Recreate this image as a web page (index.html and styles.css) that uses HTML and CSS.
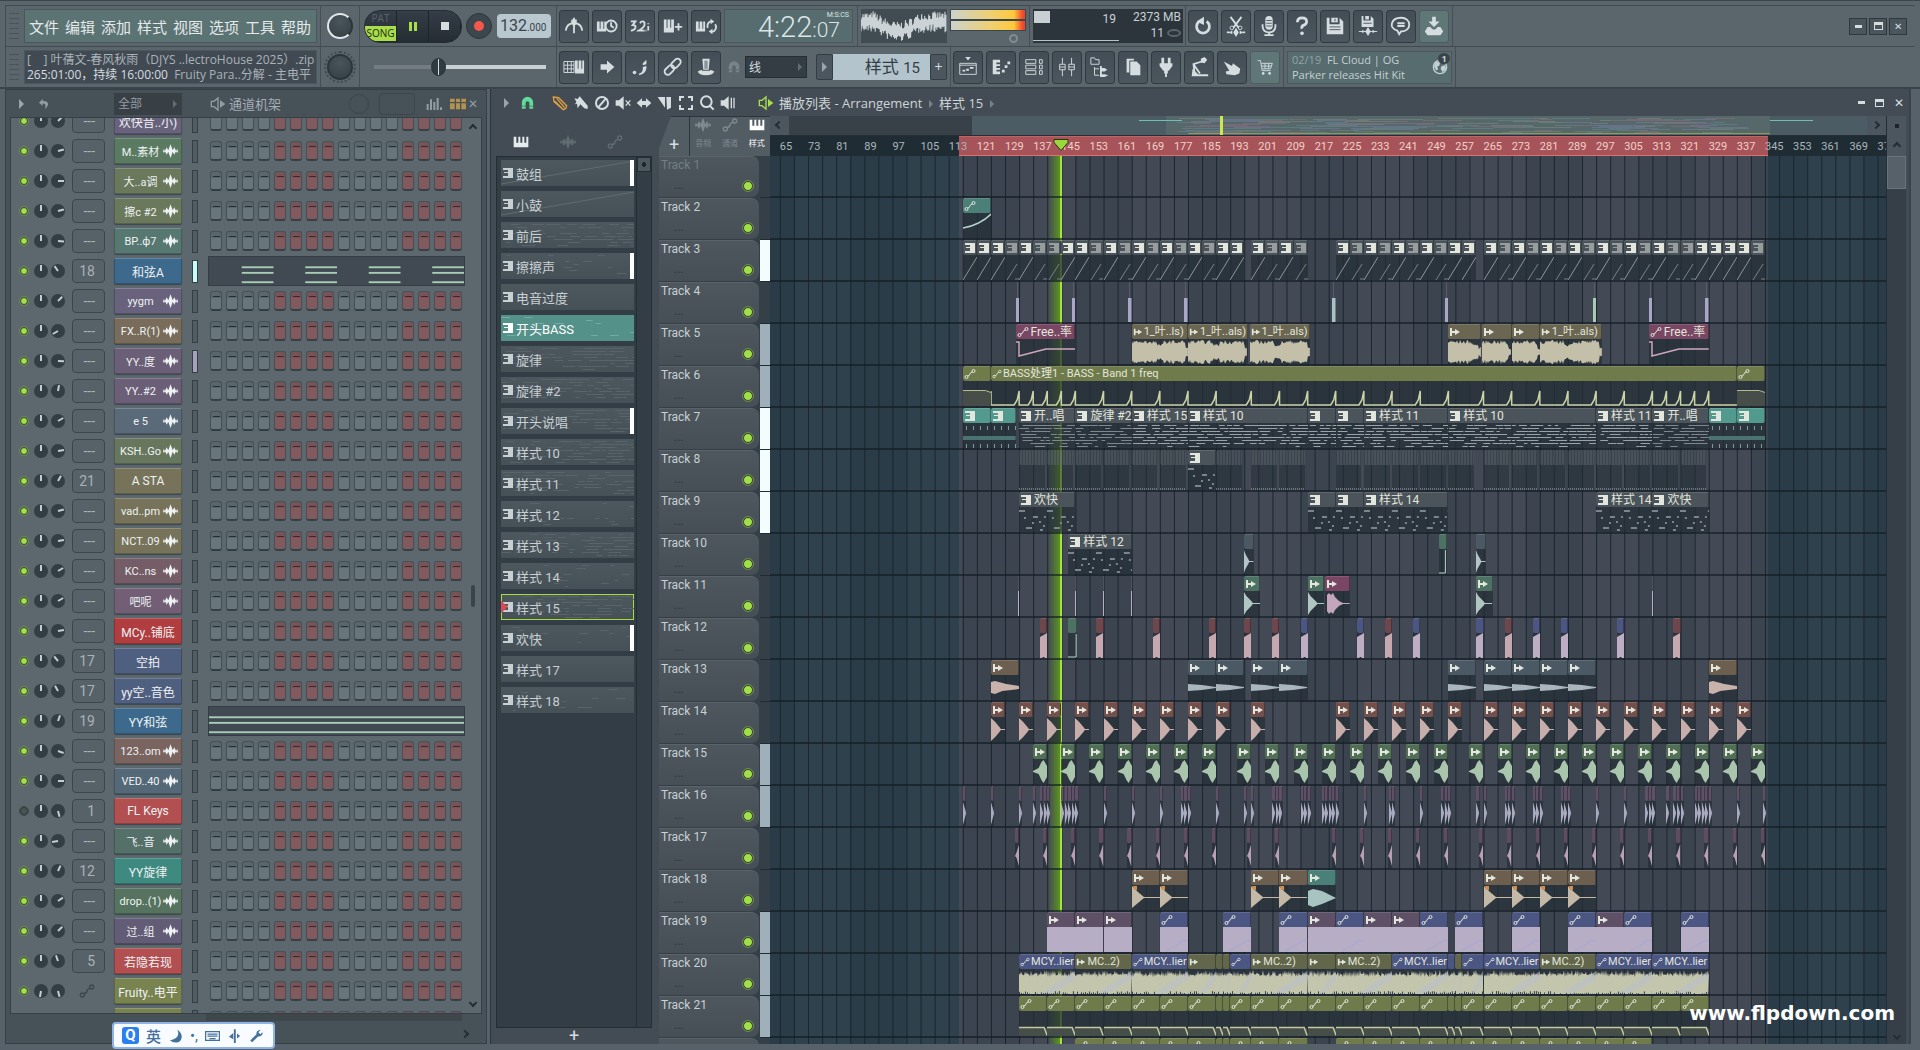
FILE: index.html
```html
<!DOCTYPE html>
<html lang="zh-CN">
<head>
    <meta charset="UTF-8">
    <meta name="viewport" content="width=device-width, initial-scale=1.0">
    <title>FL Studio</title>
    <link rel="stylesheet" href="styles.css">
</head>
<body>
    <svg class="sprite" aria-hidden="true">
        <symbol id="i-metro" viewBox="0 0 24 24"><path d="M3 17Q4 10 10 9M21 17Q20 10 14 9M12 3v17" class="s"/><path d="M9 5h6v4l-3 4-3-4z"/></symbol>
        <symbol id="i-wait" viewBox="0 0 24 24"><path d="M1 7h3v8H1zM5 7h3v8H5zM9 7h2v8H9zM1 15h10v3H1z"/><circle cx="16.500" cy="12" r="6" class="s"/><path d="M16.500 8v4l3 2" class="s"/></symbol>
        <symbol id="i-count" viewBox="0 0 24 24"><path d="M2 7h5l-3 4q4 0 3 3t-5 3M12 9q1-2 3-2t2 3-6 7h6M21 9v1M21 12v5M9 17h1M18 17h1" class="s"/></symbol>
        <symbol id="i-overdub" viewBox="0 0 24 24"><path d="M2 5h3v9H2zM6 5h3v9H6zM10 5h3v9h-3zM2 14h11v5H2zM17 9h2v3h3v2h-3v3h-2v-3h-3v-2h3z"/></symbol>
        <symbol id="i-loop" viewBox="0 0 24 24"><path d="M1 7h3v8H1zM5 7h3v8H5zM9 7h2v8H9zM1 15h10v3H1z"/><path d="M14 14a4 5 0 0 1 4-7M22 10a4 5 0 0 1-4 8" class="s"/><path d="M17 4l4 3-4 3zM19 15l-4 3 4 3z"/></symbol>
        <symbol id="i-typing" viewBox="0 0 24 24"><path d="M1 6h11v12H1zM1 10h11M1 14h11M5 6v12M9 6v12" class="s t"/><path d="M13 5h3v9h-3zM17 5h3v9h-3zM21 5h2v9h-2zM13 14h10v5H13z"/></symbol>
        <symbol id="i-arrow" viewBox="0 0 24 24"><path d="M5 9h7V5l8 7-8 7v-4H5z"/></symbol>
        <symbol id="i-steps" viewBox="0 0 24 24"><circle cx="6" cy="18" r="2"/><path d="M11 19q5-1 4-7l4-1q1 8-8 10zM15 8l4-4v5l-4 1z"/></symbol>
        <symbol id="i-link" viewBox="0 0 24 24"><g transform="rotate(-45 12 12)" class="s"><rect x="1" y="8" width="12" height="7" rx="3.500"/><rect x="11" y="8" width="12" height="7" rx="3.500"/></g></symbol>
        <symbol id="i-hat" viewBox="0 0 24 24"><path d="M8 3h8l-1 12H9z"/><path d="M3 17q4-3 5-1h8q1-2 5 1-1 4-9 4t-9-4z"/><path d="M11 5v9M13 5v9" class="k"/></symbol>
        <symbol id="i-playlist" viewBox="0 0 24 24"><path d="M3 8h18v12H3zM3 10h18" class="s t"/><path d="M9 1h6l-3 4zM6 15h3v2H6zM10 14h3v2h-3zM14 12h4v2h-4z"/></symbol>
        <symbol id="i-pianoroll" viewBox="0 0 24 24"><path d="M3 4h4v16H3zM7 4h4v3H7zM7 9h4v2H7zM7 13h4v2H7zM7 17h4v3H7zM13 15h3v3h-3zM16 10h3v3h-3zM19 6h3v3h-3z"/></symbol>
        <symbol id="i-rack" viewBox="0 0 24 24"><path d="M3 4h11v4H3zM3 10h11v4H3zM3 16h11v4H3zM18 4h3v4h-3zM18 10h3v4h-3zM18 16h3v4h-3z" class="s t"/></symbol>
        <symbol id="i-mixer" viewBox="0 0 24 24"><path d="M7 2v7M7 15v7M17 2v7M17 15v7M4 9h6v6H4zM14 9h6v6h-6zM4 12h6M14 12h6" class="s t"/></symbol>
        <symbol id="i-browser" viewBox="0 0 24 24"><path d="M2 2h4l1 2h4v5H2zM6 12v9h5M6 14h5" class="s t"/><path d="M12 11h2v2h3l3 2-3 2h-3v1h-2zM12 18h2v2h3l4 1-4 2h-5z"/></symbol>
        <symbol id="i-copy" viewBox="0 0 24 24"><path d="M5 3h8v2H8v13H5zM9 6h7l4 4v11H9z"/></symbol>
        <symbol id="i-plug" viewBox="0 0 24 24"><path d="M7 2h3v6H7zM14 2h3v6h-3zM5 8h14v3l-4 5h-1v3h-1v4h-2v-4h-1v-3H9l-4-5z"/></symbol>
        <symbol id="i-tempo" viewBox="0 0 24 24"><path d="M14 3l4-2 3 3-3 4-4-1zM4 22h18v-2H11l-6-6z"/><path d="M15 6L6 9l1 8M6 9l7 10" class="s"/></symbol>
        <symbol id="i-hand" viewBox="0 0 24 24"><path d="M3 6l9 5 1-3 8 6-1 5-5 2-9-1-1-3 4-1z"/></symbol>
        <symbol id="i-cart" viewBox="0 0 24 24"><path d="M4 5h3l2 11h9M8 8h12l-2 6H9M12 8v6M16 8v6M8 11h11" class="s t"/><circle cx="10" cy="19" r="1.500"/><circle cx="17" cy="19" r="1.500"/></symbol>
        <symbol id="i-undo" viewBox="0 0 24 24"><path d="M8 7a7 7 0 1 0 8 0" class="s b"/><path d="M5 7l8-5v9z"/></symbol>
        <symbol id="i-cut" viewBox="0 0 24 24"><path d="M6 2l9 12M18 2L9 14M2 19h3M19 19h3" class="s"/><circle cx="7.500" cy="14" r="2" class="s t"/><circle cx="16.500" cy="14" r="2" class="s t"/><path d="M4 19l4-2v4zM20 19l-4-2v4zM12 14l3 5-3 5-3-5z"/></symbol>
        <symbol id="i-mic" viewBox="0 0 24 24"><rect x="8" y="1" width="8" height="15" rx="4"/><path d="M5 10v3q1 6 7 6t7-6v-3M12 19v3M7 22h10" class="s"/><path d="M9 6h6M9 9h6M9 12h6" class="k"/></symbol>
        <symbol id="i-help" viewBox="0 0 24 24"><path d="M7 8q0-5 5-5t5 4q0 3-3 4t-2 4" class="s b"/><circle cx="12" cy="20" r="2"/></symbol>
        <symbol id="i-save" viewBox="0 0 24 24"><path d="M3 3h3v7h11V3l4 4v14H3z"/><path d="M8 3h7v5H8z"/><path d="M12 4v3M6 13h12M6 16h12" class="k"/></symbol>
        <symbol id="i-saveas" viewBox="0 0 24 24"><path d="M5 1h2v5h8V1l3 3v9H5zM9 1h4v4H9zM4 18l3-2v4zM20 18l-3-2v4zM12 13l3 5-3 5-3-5z"/><path d="M2 18h20" class="s t"/><path d="M7 9h9" class="k"/></symbol>
        <symbol id="i-chat" viewBox="0 0 24 24"><path d="M12 3c12 0 12 15 0 15l-2 3-2-4C-2 14 1 3 12 3zM8 9h8M8 12h8" class="s"/></symbol>
        <symbol id="i-dl" viewBox="0 0 24 24"><path d="M10 2h4v5h4l-6 6-6-6h4zM5 13h3q4 6 8 0h3l3 5-3 4H5l-3-4z"/></symbol>
        <symbol id="i-magnet" viewBox="0 0 24 24"><path d="M3 21V11a9 9 0 0 1 18 0v10h-6V12a3 3 0 0 0-6 0v9z"/><path d="M3 17h6M15 17h6" class="k"/></symbol>
        <symbol id="i-pencil" viewBox="0 0 24 24"><path d="M2 3l8 1 12 12-1 4-4 2L3 10zM7 5l12 14M4 9l12 12" class="s"/></symbol>
        <symbol id="i-brush" viewBox="0 0 24 24"><path d="M2 5l5 1 3-4 5 6 7 8v5l-5-1-6-6-4 6-1-7-3 1 2-4z"/></symbol>
        <symbol id="i-ban" viewBox="0 0 24 24"><circle cx="12" cy="12" r="9" class="s b"/><path d="M18 5L6 19" class="s b"/></symbol>
        <symbol id="i-mute" viewBox="0 0 24 24"><path d="M1 8h5l7-6v20l-7-6H1z"/><path d="M16 8l7 8M23 8l-7 8" class="s"/></symbol>
        <symbol id="i-slip" viewBox="0 0 24 24"><path d="M1 12l8-7v4h6V5l8 7-8 7v-4H9v4z"/></symbol>
        <symbol id="i-slice" viewBox="0 0 24 24"><path d="M1 3h11v16z"/><path d="M14 3h7v16l-6 3z"/></symbol>
        <symbol id="i-select" viewBox="0 0 24 24"><path d="M3 9V3h6M15 3h6v6M21 15v6h-6M9 21H3v-6" class="s b"/></symbol>
        <symbol id="i-zoom" viewBox="0 0 24 24"><circle cx="11" cy="10" r="8" class="s b"/><path d="M16 16l6 6" class="s b"/></symbol>
        <symbol id="i-play" viewBox="0 0 24 24"><path d="M1 8h5l7-6v20l-7-6H1zM16 4h2v16h-2zM20 4h2v16h-2z"/></symbol>
        <symbol id="i-speaker" viewBox="0 0 24 24"><path d="M2 8h4l6-5v18l-6-5H2z" class="s"/><path d="M15 6l8 6-8 6z"/></symbol>
        <symbol id="i-keys" viewBox="0 0 24 24"><path d="M1 4h4v9H1zM8 4h3v9H8zM14 4h3v9h-3zM20 4h3v9h-3zM1 13h22v7H1z"/></symbol>
        <symbol id="i-wave" viewBox="0 0 24 24"><path d="M12 1l4 11-4 11-4-11zM6 6l3 6-3 6-3-6zM18 6l3 6-3 6-3-6zM0 11h24v2H0zM1 9h1v6H1zM22 9h1v6h-1z"/></symbol>
        <symbol id="i-auto" viewBox="0 0 24 24"><circle cx="5" cy="18" r="3" class="s"/><circle cx="19" cy="6" r="3" class="s"/><path d="M7 16q4 0 5-4t5-4" class="s"/></symbol>
        <symbol id="i-pat" viewBox="0 0 12 12"><path d="M6 1h5v10H6zM1 1h5v2H1zM2 5h4v1H2zM1 9h5v2H1z"/></symbol>
        <symbol id="i-clip" viewBox="0 0 12 12"><path d="M1 2h2v3h3V3l5 3-5 3V7H3v3H1z"/></symbol>
        <symbol id="i-back" viewBox="0 0 24 24"><path d="M8 1L0 9l8 7v-5q9-1 5 12 16-16-5-18z"/></symbol>
        <symbol id="i-bars" viewBox="0 0 24 24"><path d="M1 12h3v9H1zM6 5h3v16H6zM11 9h3v12h-3zM16 3h3v18h-3zM21 17h3v4h-3z"/></symbol>
        <symbol id="i-pads" viewBox="0 0 24 24"><path d="M0 4h7v5H0zM9 4h6v5H9zM17 4h7v5h-7zM0 11h7v9H0zM9 11h6v9H9zM17 11h7v9h-7z"/></symbol>
        <symbol id="i-globe" viewBox="0 0 24 24"><circle cx="12" cy="12" r="10" class="s"/><path d="M4 7q5-5 8-2l-1 5-3 1 1 5-3 1-3-6zM14 11l6-2 1 6-5 5-3-5z"/></symbol>
        <symbol id="i-moon" viewBox="0 0 24 24"><path d="M15 2q6 13-12 17 16 9 19-5 0-8-7-12z"/></symbol>
        <symbol id="i-kbd" viewBox="0 0 24 24"><path d="M1 5h22v14H1zM4 9h16M4 12h16M7 16h10" class="s"/></symbol>
        <symbol id="i-pin" viewBox="0 0 24 24"><path d="M11 1h3v22h-3zM3 13l7-6v10zM16 8l5 4-5 4z"/></symbol>
        <symbol id="i-wrench" viewBox="0 0 24 24"><path d="M2 19L12 9q-1-6 7-7l-4 4 3 3 4-3q0 7-8 7L5 22z"/></symbol>
    </svg>

    <header class="toolbar">
        <div class="bar">
            <span class="grip"></span>
            <nav class="menu">
                <button>文件</button><button>编辑</button><button>添加</button><button>样式</button><button>视图</button><button>选项</button><button>工具</button><button>帮助</button>
            </nav>
            <div class="cell knob-cell"><span class="dial dial-big"></span></div>
            <div class="cell transport">
                <div class="deck">
                    <button class="mode"><span>PAT</span><b>SONG</b></button>
                    <button class="pause" aria-label="暂停"><i></i><i></i></button>
                    <button class="stop" aria-label="停止"><i></i></button>
                </div>
                <button class="rec" aria-label="录音"><i></i></button>
                <div class="tempo">132<small>.000</small></div>
            </div>
            <div class="cell tools" data-icons="metro wait count overdub loop"></div>
            <div class="clock"><span>4:22<small>:07</small></span><sup>M:S:CS</sup></div>
            <div class="cell scope">
                <svg class="osc" viewBox="0 0 85 33" preserveAspectRatio="none"></svg>
                <div class="peaks"><i></i><i></i><span></span></div>
            </div>
            <div class="cell cpu">
                <div class="cpu-box">
                    <div class="cpu-left"><i></i><span>19</span></div>
                    <div class="cpu-right"><span>2373 MB</span><span>11 <em></em></span></div>
                </div>
            </div>
            <div class="cell tools last" data-icons="undo cut mic help save saveas chat *dl"></div>
            <div class="wins"><button aria-label="最小化"><i class="min"></i></button><button aria-label="还原"><i class="max"></i></button><button aria-label="关闭">✕</button></div>
        </div>
        <div class="bar">
            <span class="grip"></span>
            <div class="hint">
                <div class="dim">[&nbsp;&nbsp;&nbsp; ] 叶蒨文-春风秋雨（DJYS ..lectroHouse 2025）.zip</div>
                <div>265:01:00，持续 16:00:00&nbsp; <span>Fruity Para..分解 - 主电平</span></div>
            </div>
            <div class="cell knob-cell"><span class="dial dial-pitch"></span></div>
            <div class="cell transport"><input class="pos" type="range" min="0" max="100" value="36" aria-label="歌曲位置"></div>
            <div class="cell tools" data-icons="typing arrow steps link hat"></div>
            <div class="snap">
                <svg class="icon dimmed"><use href="#i-magnet"/></svg>
                <span class="drop"><select aria-label="吸附"><option>线</option></select></span>
            </div>
            <div class="pattern">
                <button aria-label="样式菜单"><i class="tri"></i></button>
                <div class="pat-name">样式 <span>15</span></div>
                <button>+</button>
            </div>
            <div class="cell tools" data-icons="playlist pianoroll rack mixer browser copy plug tempo hand *cart"></div>
            <div class="cell news-cell">
                <a class="news" href="#news">
                    <span><em>02/19</em>&nbsp; FL Cloud | OG<br>Parker releases Hit Kit</span>
                    <svg class="icon"><use href="#i-globe"/></svg><b>1</b>
                </a>
            </div>
        </div>
    </header>

    <main>
        <section class="rack">
            <div class="rack-head">
                <i class="tri"></i>
                <svg class="icon back"><use href="#i-back"/></svg>
                <span class="drop"><select aria-label="通道过滤"><option>全部</option></select></span>
                <svg class="icon spk"><use href="#i-speaker"/></svg>
                <h2>通道机架</h2>
                <span class="swing"></span><span class="swing-box"></span>
                <svg class="icon"><use href="#i-bars"/></svg>
                <svg class="icon pads"><use href="#i-pads"/></svg>
                <button aria-label="关闭">✕</button>
            </div>
            <div class="rack-body">
                <div class="channels" id="channels"></div>
                <div class="rack-scroll"><i class="chev up"></i><span></span><i class="chev down"></i></div>
            </div>
            <div class="rack-foot"><span></span><i class="chev right"></i></div>
        </section>

        <section class="playlist">
            <div class="pl-head">
                <i class="tri"></i>
                <svg class="icon green"><use href="#i-magnet"/></svg>
                <div class="pl-tools" id="pl-tools"></div>
                <svg class="icon lime"><use href="#i-speaker"/></svg>
                <h2>播放列表 - Arrangement <i class="tri"></i> 样式 15 <i class="tri"></i></h2>
                <div class="pl-wins"><i class="min"></i><i class="max"></i><span>✕</span></div>
            </div>
            <div class="pl-body">
                <aside class="picker">
                    <div class="picker-tabs">
                        <svg class="icon on"><use href="#i-keys"/></svg>
                        <svg class="icon"><use href="#i-wave"/></svg>
                        <svg class="icon"><use href="#i-auto"/></svg>
                    </div>
                    <div class="picker-box">
                        <ul id="patterns"></ul>
                        <div class="picker-scroll"><i></i></div>
                    </div>
                    <button class="add">+</button>
                </aside>
                <div class="arr">
                    <div class="corner">
                        <button class="corner-add">+</button>
                        <div class="modes">
                            <span><svg class="icon"><use href="#i-wave"/></svg>音频</span>
                            <span><svg class="icon"><use href="#i-auto"/></svg>通道</span>
                            <span class="on"><svg class="icon"><use href="#i-keys"/></svg>样式</span>
                        </div>
                    </div>
                    <div class="heads">
                        <div class="overview"><span><i class="chev left"></i></span><div class="mini" id="mini"></div><span><i class="chev right"></i></span></div>
                        <div class="ruler" id="ruler"></div>
                    </div>
                    <div class="vtop"><i class="dot"></i><i class="chev up"></i></div>
                    <div class="names" id="names"></div>
                    <div class="lanes" id="lanes"></div>
                    <div class="vscroll"><span></span><i class="chev down"></i></div>
                </div>
            </div>
        </section>
    </main>

    <div class="ime"><b>Q</b><strong>英</strong>
        <svg class="icon"><use href="#i-moon"/></svg><span>•,</span>
        <svg class="icon"><use href="#i-kbd"/></svg>
        <svg class="icon"><use href="#i-pin"/></svg>
        <svg class="icon"><use href="#i-wrench"/></svg>
    </div>
    <div class="watermark">www.flpdown.com</div>

    <script src="script.js"></script>
</body>
</html>
```

FILE: styles.css
```css
* {
    box-sizing: border-box;
}
body {
    margin: 0;
    height: 100vh;
    display: flex;
    flex-direction: column;
    overflow: hidden;
    background: #566169;
    color: #d5dde0;
    font-family: Roboto, "Noto Sans CJK SC", sans-serif;
    font-size: 12px;
}
button, select, input {
    font: inherit;
    color: inherit;
    margin: 0;
    padding: 0;
    border: 0;
    background: none;
}
select {
    appearance: none;
}
h2 {
    margin: 0;
    font-weight: normal;
    font-size: 14px;
}
.sprite {
    position: absolute;
    width: 0;
    height: 0;
}
.icon {
    width: 16px;
    height: 16px;
    flex: none;
    fill: currentColor;
}
.s {
    fill: none;
    stroke: currentColor;
    stroke-width: 2;
}
.t {
    stroke-width: 1;
}
.b {
    stroke-width: 3;
}
.k {
    fill: none;
    stroke: #4b565e;
    stroke-width: 1;
}
.tri {
    display: inline-block;
    border-left: 5px solid #9aa5aa;
    border-top: 5px solid transparent;
    border-bottom: 5px solid transparent;
}
.drop {
    position: relative;
}
.drop::after {
    content: "";
    position: absolute;
    right: 5px;
    top: 7px;
    border-left: 4px solid #626d73;
    border-top: 4px solid transparent;
    border-bottom: 4px solid transparent;
}
.chev {
    display: inline-block;
    width: 6px;
    height: 6px;
    border: solid #252e34;
    border-width: 2px 2px 0 0;
}
.up {
    transform: rotate(-45deg);
}
.down {
    transform: rotate(135deg);
}
.left {
    transform: rotate(-135deg);
}
.right {
    transform: rotate(45deg);
}
.min {
    width: 7px;
    height: 3px;
    background: #d5dde0;
}
.max {
    width: 9px;
    height: 8px;
    border: 1px solid #d5dde0;
    border-top-width: 3px;
}

/* Toolbar */
.toolbar {
    flex: none;
    padding: 4px 5px 0;
    border-top: 1px solid #3b454c;
    background: #5a656c;
    border-bottom: 2px solid #39434a;
    font-family: "Open Sans", "Noto Sans CJK SC", sans-serif;
}
.bar {
    display: flex;
    align-items: center;
    height: 41px;
    border-top: 1px solid #414b52;
    border-left: 1px solid #414b52;
}
.grip {
    width: 10px;
    height: 27px;
    margin: 0 5px 0 3px;
    background: repeating-linear-gradient(#49535a 0 1px, transparent 1px 5px);
}
.menu, .hint {
    width: 293px;
    height: 34px;
    margin-right: 3px;
    border: 1px solid #4a575c;
    background: #5c7373;
}
.menu {
    display: flex;
    align-items: center;
    gap: 6px;
    padding-left: 4px;
    font-size: 15px;
    color: #e3eaea;
}
.hint {
    padding: 1px 2px;
    background: #414a52;
    line-height: 15px;
    white-space: nowrap;
    overflow: hidden;
}
.dim, .hint span {
    color: #a9b3b8;
}
.cell {
    flex: none;
    height: 40px;
    display: flex;
    align-items: center;
    border-left: 1px solid #464f56;
}
.knob-cell {
    width: 39px;
    justify-content: center;
}
.dial {
    width: 26px;
    height: 26px;
    border-radius: 50%;
    background: radial-gradient(circle at 50% 30%, #4a545b, #343e45);
    border: 2px solid #2c353b;
}
.dial-big {
    border-color: #e2e8ea;
    border-right-color: #2c353b;
}
.dial-pitch {
    outline: 2px dotted #414b52;
    outline-offset: 1px;
}
.transport {
    width: 197px;
    padding-left: 4px;
}
.deck {
    display: flex;
    width: 98px;
    height: 33px;
    border-radius: 16px;
    overflow: hidden;
    background: linear-gradient(#343e46, #252d34);
    border: 1px solid #252d33;
}
.deck button {
    flex: 1;
    display: flex;
    align-items: center;
    justify-content: center;
    gap: 2px;
    border-right: 1px solid #1c2429;
}
.deck .mode {
    flex-direction: column;
    gap: 0;
    font-size: 10px;
    line-height: 15px;
    color: #59646a;
}
.mode b {
    width: 100%;
    background: #a8dc4a;
    color: #1e2a12;
    font-weight: normal;
}
.pause i {
    width: 3px;
    height: 9px;
    background: #a8dc4a;
}
.stop i {
    width: 8px;
    height: 8px;
    background: #d5dde0;
}
.rec {
    width: 26px;
    height: 26px;
    margin: 0 5px 0 4px;
    border-radius: 50%;
    background: #3c464d;
    border: 1px solid #2d363c;
}
.rec i {
    display: block;
    width: 10px;
    height: 10px;
    margin: 7px;
    border-radius: 50%;
    background: #f5574a;
}
.tempo {
    width: 54px;
    height: 24px;
    padding-left: 3px;
    border-radius: 4px;
    background: #b9c8cf;
    color: #3a464d;
    font: 16px/24px Roboto, sans-serif;
}
.tempo small {
    font-size: 10px;
}
.tools {
    gap: 3px;
    padding: 0 3px 0 2px;
}
.tools button {
    width: 30px;
    height: 33px;
    display: flex;
    align-items: center;
    justify-content: center;
    border: 1px solid #303a41;
    border-radius: 3px;
    background: linear-gradient(#424d55, #4b565e);
}
.tools .icon {
    width: 22px;
    height: 22px;
}
.tools .tint {
    background: #5f7777;
    border-color: #4a5d60;
}
.last {
    border-right: 1px solid #464f56;
}
.clock {
    width: 129px;
    height: 34px;
    position: relative;
    margin-right: 4px;
    padding-right: 12px;
    border: 1px solid #4a575c;
    background: #566c6e;
    text-align: right;
    font: 29px/34px Roboto, sans-serif;
    font-weight: 300;
    color: #dce5e6;
}
.clock small {
    font-size: 21px;
}
.clock sup {
    position: absolute;
    top: 1px;
    right: 3px;
    font-size: 7px;
    line-height: 8px;
    font-weight: 400;
}
.scope {
    width: 172px;
    gap: 3px;
    padding-left: 3px;
}
.osc {
    width: 86px;
    height: 34px;
    background: #414b52;
}
.peaks {
    width: 76px;
    height: 34px;
}
.peaks i {
    display: block;
    height: 11px;
    background: linear-gradient(90deg, #ccd2cc, #f0d070 55%, #ffc83c 85%, #f0482c 97%);
    border: 1px solid #3c464d;
}
.peaks span {
    display: block;
    width: 9px;
    height: 9px;
    margin: 3px 0 0 59px;
    border: 2px solid #828d92;
    border-radius: 50%;
}
.cpu {
    width: 156px;
    padding-left: 3px;
}
.cpu-box {
    display: flex;
    width: 150px;
    height: 34px;
    background: #2c353c;
    color: #c8d0d4;
    font: 12px/16px Roboto, sans-serif;
}
.cpu-left {
    width: 86px;
    display: flex;
    justify-content: space-between;
    padding: 2px 3px 0 1px;
    border-bottom: 1px solid #b9c4c8;
    margin-bottom: 2px;
}
.cpu-left i {
    width: 16px;
    height: 12px;
    background: #c8d0d4;
}
.cpu-right {
    flex: 1;
    text-align: right;
    padding-right: 2px;
}
.cpu-right span {
    display: block;
    white-space: nowrap;
}
.cpu-right em {
    display: inline-block;
    width: 14px;
    height: 8px;
    border: 2px solid #5a656c;
    border-radius: 50%;
}
.wins {
    display: flex;
    gap: 2px;
    margin: 0 8px 0 auto;
}
.wins button {
    width: 18px;
    height: 17px;
    display: flex;
    align-items: center;
    justify-content: center;
    border: 1px solid #2f383f;
    background: #4b555c;
    font-size: 10px;
}
.pos {
    appearance: none;
    width: 172px;
    height: 20px;
    margin-left: 10px;
    background: linear-gradient(90deg, #727c82 33%, #c8d0d3 33%) center / 100% 4px no-repeat;
}
.pos::-webkit-slider-thumb {
    appearance: none;
    width: 15px;
    height: 18px;
    border: 1px solid #262f35;
    border-radius: 50%;
    background: linear-gradient(90deg, #303a41 45%, #d5dde0 45% 55%, #303a41 55%);
}
.snap {
    display: flex;
    align-items: center;
    gap: 4px;
    padding-left: 3px;
    width: 92px;
}
.snap select {
    width: 62px;
    height: 22px;
    padding-left: 3px;
    border: 1px solid #252e34;
    background: #343d44;
}
.dimmed {
    width: 14px;
    color: #78838a;
}
.pattern {
    display: flex;
    width: 131px;
    height: 26px;
    margin-right: 3px;
}
.pattern button {
    width: 17px;
    border: 1px solid #343d44;
    border-radius: 2px;
    background: #4b565e;
    font-size: 14px;
    line-height: 20px;
}
.pat-name {
    flex: 1;
    padding-right: 10px;
    background: #b4c4cc;
    color: #333e46;
    text-align: right;
    font-size: 17px;
    line-height: 25px;
}
.pat-name span {
    font-family: Roboto, sans-serif;
    font-size: 15px;
}
.news-cell {
    width: 173px;
    padding: 0 3px;
    border-right: 1px solid #464f56;
}
.news {
    position: relative;
    display: flex;
    justify-content: space-between;
    align-items: center;
    width: 165px;
    height: 33px;
    padding: 0 3px 0 4px;
    border: 1px solid #4a575c;
    background: #566c6e;
    color: #c5d0d2;
    font-size: 11px;
    line-height: 15px;
    text-decoration: none;
    white-space: nowrap;
}
.news em {
    font-style: normal;
    color: #93a3a6;
}
.news b {
    position: absolute;
    right: 1px;
    top: 1px;
    width: 12px;
    border-radius: 50%;
    background: #39444a;
    font-size: 9px;
    line-height: 11px;
    text-align: center;
}

main {
    flex: 1;
    min-height: 0;
    display: flex;
    gap: 3px;
    padding: 0 9px 6px 5px;
}

/* Channel rack */
.rack {
    flex: none;
    width: 482px;
    display: flex;
    flex-direction: column;
    padding: 0 4px;
    background: #475158;
    border: 1px solid #363f46;
}
.rack-head {
    display: flex;
    align-items: center;
    height: 27px;
    padding: 0 2px 0 9px;
    color: #929ca1;
    font-family: "Open Sans", "Noto Sans CJK SC", sans-serif;
}
.rack-head .icon {
    margin-left: 15px;
}
.rack-head .back {
    width: 11px;
    margin-left: 15px;
}
.rack-head .drop {
    margin-left: 64px;
}
.rack-head select {
    display: block;
    width: 68px;
    height: 22px;
    padding-left: 4px;
    background: #383f45;
}
.rack-head .spk {
    margin-left: 28px;
}
.rack-head h2 {
    width: 118px;
    padding-left: 3px;
    color: #a4adb2;
    font-size: 13px;
}
.swing {
    width: 20px;
    height: 20px;
    margin-left: 5px;
    border: 1px solid #3c454c;
    border-radius: 50%;
}
.swing-box {
    width: 36px;
    height: 22px;
    margin-left: 10px;
    margin-right: -4px;
    border: 1px solid #3c454c;
    border-radius: 4px;
}
.rack-head .pads {
    margin-left: 8px;
    color: #b4924e;
}
.rack-head button {
    flex: 1;
}
.rack-body {
    flex: 1;
    min-height: 0;
    display: flex;
    overflow: hidden;
    border: 1px solid #363f46;
    background: #5d686e;
}
.channels {
    flex: 1;
    margin-top: -12px;
}
.channel {
    height: 30px;
    display: flex;
    align-items: center;
}
.led {
    width: 8px;
    height: 8px;
    margin-left: 9px;
    border: 1px solid #31402a;
    outline: 1px solid #6f8d55;
    border-radius: 50%;
    background: #a2e04a;
}
.led.off {
    background: #47525a;
    outline-color: #3a454b;
}
.pot {
    width: 14px;
    height: 14px;
    margin-left: 3px;
    border-radius: 50%;
    background: #333d44;
}
.led + .pot {
    margin-left: 6px;
}
.pot i {
    display: block;
    width: 2px;
    height: 6px;
    margin: 1px 6px;
    background: #c5cdd0;
    transform-origin: 50% 6px;
}
.num {
    width: 33px;
    height: 24px;
    margin-left: 7px;
    padding-right: 9px;
    border: 1px solid #3c464d;
    border-radius: 4px;
    background: #566168;
    color: #a9b2b6;
    font-size: 14px;
    line-height: 22px;
    text-align: right;
}
.num .icon {
    margin-top: 3px;
    color: #3d474d;
}
.num.free {
    border-color: transparent;
    background: none;
}
.name {
    width: 68px;
    height: 26px;
    margin-left: 9px;
    padding: 0 3px;
    display: flex;
    align-items: center;
    justify-content: center;
    border-radius: 2px;
    border: 1px solid rgba(0, 0, 0, 0.2);
    border-top-color: rgba(255, 255, 255, 0.2);
    box-shadow: 0 1px 1px #3c464d;
    color: #eef2f3;
    font-size: 12px;
    white-space: nowrap;
}
.name.smp {
    font-size: 11px;
}
.name span {
    flex: 1;
}
.name .icon {
    width: 15px;
}
.meter {
    width: 6px;
    height: 23px;
    margin: 0 10px;
    border: 1px solid #343e45;
    background: #515c64;
}
.seq {
    display: flex;
    gap: 4px;
    padding-left: 2px;
}
.seq button {
    width: 12px;
    height: 20px;
    border: 1px solid #465057;
    border-bottom: 2px solid #353f46;
    border-radius: 3px;
    background: linear-gradient(#59666b 6px, #68757a 6px);
    display: flex;
    justify-content: center;
    padding-top: 4px;
}
.seq button i {
    width: 7px;
    height: 1px;
    background: #232c32;
}
.seq .r {
    background: linear-gradient(#755558 6px, #82595c 6px);
}
.seq .r i {
    background: #4a2428;
}
.roll {
    width: 257px;
    height: 30px;
    background: #414a52;
    border: 1px solid #343d44;
}
.rack-scroll {
    width: 20px;
    display: flex;
    flex-direction: column;
    align-items: center;
    justify-content: space-between;
    padding: 7px 0;
}
.rack-scroll span {
    width: 4px;
    height: 22px;
    margin-top: 60px;
    border-radius: 2px;
    background: #39434a;
}
.rack-foot {
    height: 29px;
    display: flex;
    justify-content: flex-end;
}
.rack-foot span {
    width: 256px;
    height: 7px;
    background: #3d474c;
}
.rack-foot i {
    margin: 17px 14px 0 0;
}

/* Playlist */
.playlist {
    flex: 1;
    min-width: 0;
    display: flex;
    flex-direction: column;
    padding-right: 3px;
    background: #434c54;
    border-left: 1px solid #2c353c;
    border-right: 2px solid #39434a;
}
.pl-head {
    display: flex;
    align-items: center;
    height: 27px;
    padding: 0 2px 0 13px;
    font-family: "Open Sans", "Noto Sans CJK SC", sans-serif;
}
.pl-head .green {
    width: 15px;
    margin-left: 11px;
    color: #5fdc96;
}
.pl-tools {
    display: flex;
    gap: 5px;
    margin: 0 22px 0 17px;
}
.pl-tools .icon:first-child {
    color: #e0a040;
}
.lime {
    color: #a8e04a;
}
.pl-head h2 {
    padding-left: 5px;
    font-size: 13px;
    color: #ccd4d7;
}
.pl-head h2 .tri {
    margin: 0 3px;
    border-width: 4px;
    border-right: 0;
    border-left-color: #77828a;
}
.pl-wins {
    display: flex;
    align-items: center;
    gap: 10px;
    margin-left: auto;
}
.pl-body {
    flex: 1;
    min-height: 0;
    display: flex;
}
.picker {
    flex: none;
    width: 168px;
    padding: 0 7px 0 5px;
    display: flex;
    flex-direction: column;
}
.picker-tabs {
    display: flex;
    align-items: center;
    gap: 31px;
    height: 40px;
    padding: 12px 0 0 17px;
    color: #606b72;
}
.picker .on {
    color: #e6ecee;
}
.picker-box {
    flex: 1;
    display: flex;
    border: 1px solid #252e35;
    background: #333d46;
}
#patterns {
    flex: 1;
    margin: 0;
    padding: 3px 2px 0 4px;
    list-style: none;
    border-right: 1px solid #252e35;
}
#patterns li {
    position: relative;
    display: flex;
    align-items: center;
    height: 26px;
    margin-bottom: 5px;
    padding-left: 1px;
    gap: 2px;
    background: linear-gradient(#4d575e, #465057);
    font-size: 13px;
    color: #c8d0d3;
    overflow: hidden;
}
#patterns li .icon {
    width: 12px;
    height: 12px;
}
#patterns li svg.preview {
    position: absolute;
    inset: 0;
    width: 100%;
    height: 100%;
}
#patterns li .icon, #patterns li span {
    position: relative;
}
#patterns .teal {
    background: #539189;
    color: #fff;
}
#patterns .sel {
    box-shadow: inset 0 0 0 1px #a8dc3c;
}
#patterns .sel::before {
    content: "";
    position: absolute;
    z-index: 1;
    left: 0;
    border-left: 7px solid #d84858;
    border-top: 6px solid transparent;
    border-bottom: 6px solid transparent;
}
#patterns .mark::after {
    content: "";
    position: absolute;
    right: 0;
    width: 4px;
    height: 26px;
    background: #fff;
}
.picker-scroll i {
    display: block;
    width: 14px;
    height: 15px;
    border: 1px solid #252e35;
    background: radial-gradient(#1d252b 2px, #4d575e 2px);
}
.add {
    height: 16px;
    font-size: 18px;
    line-height: 16px;
}
.arr {
    flex: 1;
    min-width: 0;
    display: grid;
    grid-template-columns: 111px 1fr 20px;
    grid-template-rows: 40px 1fr;
}
.corner {
    display: flex;
    border-top: 1px solid #2c353c;
    background: #525c63;
    clip-path: polygon(12px 0, 100% 0, 100% 100%, 0 100%, 0 32px);
}
.corner-add {
    width: 31px;
    padding-top: 16px;
    border-right: 1px solid #2c353c;
    font-size: 18px;
    line-height: 18px;
}
.modes {
    flex: 1;
    display: flex;
    justify-content: space-around;
    font-size: 8px;
    color: #7e898f;
}
.modes span {
    display: flex;
    flex-direction: column;
    align-items: center;
    line-height: 22px;
}
.modes .on {
    color: #fff;
}
.heads {
    overflow: hidden;
}
.overview {
    height: 20px;
    display: flex;
    background: #4b565e;
    border-bottom: 1px solid #252e35;
}
.overview > span {
    flex: none;
    width: 19px;
    padding: 1px 0 0 6px;
}
.mini {
    position: relative;
    flex: 1;
    height: 19px;
    background: linear-gradient(90deg, #384148 17%, #4b5c65 17%);
    overflow: hidden;
}
.mini i {
    position: absolute;
    height: 1px;
}
.mini .veil {
    height: 19px;
    background: rgba(120, 140, 120, 0.25);
}
.mini .now {
    width: 3px;
    height: 19px;
    background: #cce84a;
}
.ruler {
    position: relative;
    height: 20px;
    background: #1f2c34;
    overflow: hidden;
}
.ruler .range {
    position: absolute;
    top: 0;
    bottom: 0;
    background: #a65459;
    border-bottom: 1px solid #d8746f;
    border-top: 1px solid #c06463;
}
.ruler span {
    position: absolute;
    line-height: 22px;
    font-size: 11px;
    color: #aab6bc;
}
.ruler .in {
    color: #f2d0c8;
}
.ruler .head {
    position: absolute;
    top: 2px;
    width: 16px;
    height: 14px;
    margin-left: -8px;
    fill: #9ad83a;
    stroke: #26351a;
}
.vtop, .vscroll {
    border-left: 1px solid #252e35;
    background: #363f47;
}
.vtop {
    display: flex;
    flex-direction: column;
    align-items: center;
    justify-content: space-around;
    background: #4b565e;
}
.dot {
    width: 4px;
    height: 4px;
    background: #1d252b;
}
.vscroll {
    display: flex;
    flex-direction: column;
    align-items: center;
    justify-content: space-between;
    padding-bottom: 5px;
}
.vscroll span {
    width: 19px;
    height: 33px;
    background: #56616a;
    border: 1px solid #68737a;
}
.names, .lanes {
    min-height: 0;
    overflow: hidden;
}
.track {
    height: 42px;
    display: flex;
    background: #353f47;
}
.track div {
    flex: 1;
    position: relative;
    margin-right: 1px;
    padding-left: 2px;
    border-top: 1px solid #59636a;
    border-bottom: 1px solid #363f46;
    border-radius: 0 8px 8px 0;
    background: linear-gradient(#4d575d, #464f56);
    font-size: 12px;
    line-height: 16px;
    color: #c8d0d3;
}
.track div.muted {
    color: #747e84;
}
.track div::before {
    content: "...";
    position: absolute;
    left: 15px;
    bottom: 4px;
    color: #2c353c;
}
.track div::after {
    content: "";
    position: absolute;
    right: 6px;
    bottom: 6px;
    width: 8px;
    height: 8px;
    border: 1px solid #31402a;
    outline: 1px solid #6f8d55;
    border-radius: 50%;
    background: #a2e04a;
}
.track > i {
    width: 10px;
    border-bottom: 1px solid #1f2c34;
}
.c-white {
    background: #f4fdfd;
}
.c-grey {
    background: #9fb0bb;
}
.lanes {
    position: relative;
    background: #2e414c;
}
.lanes > .region {
    position: absolute;
    top: 0;
    bottom: 0;
    background: #434a55;
}
.grid {
    position: absolute;
    inset: 0;
    width: 100%;
    height: 100%;
}
.playhead {
    position: absolute;
    top: 0;
    bottom: 0;
    width: 14px;
    margin-left: -13px;
    border-right: 2px solid #a4e43c;
    background: linear-gradient(90deg, transparent, #5c9420);
}
.lane {
    position: relative;
    height: 42px;
    border-bottom: 2px solid rgba(18, 28, 36, 0.65);
}
.clip {
    position: absolute;
    top: 0;
    bottom: 0;
    overflow: hidden;
}
.clip header {
    height: 15px;
    display: flex;
    align-items: center;
    gap: 2px;
    padding-left: 1px;
    border-right: 1px solid rgba(0, 0, 0, 0.3);
    border-top: 1px solid rgba(255, 255, 255, 0.12);
    border-radius: 2px;
    font-size: 12px;
    line-height: 14px;
    white-space: nowrap;
    color: #e2e6dc;
}
.clip header .icon {
    width: 12px;
    height: 12px;
}
.clip.small header {
    gap: 1px;
    font-size: 11px;
}
.clip.small header .icon {
    width: 10px;
}
.clip.dimclip header .icon {
    opacity: 0.5;
}
.clip.striped {
    opacity: 0.75;
}
.clip.striped header {
    border: 0;
    background-image: repeating-linear-gradient(90deg, #39424a 0 1px, transparent 1px 3px);
}
.clip .body {
    display: block;
    width: 100%;
    height: 25px;
    background: rgba(38, 47, 55, 0.75);
}

/* Floating items */
.ime {
    position: absolute;
    left: 112px;
    bottom: 1px;
    display: flex;
    align-items: center;
    gap: 7px;
    height: 27px;
    padding: 0 9px 0 8px;
    border: 2px solid #8fb3e6;
    border-radius: 4px;
    background: #f8fbff;
    color: #44709e;
    font-size: 15px;
}
.ime b {
    width: 17px;
    height: 17px;
    border-radius: 3px;
    background: #2a80ee;
    color: #fff;
    line-height: 17px;
    text-align: center;
}
.ime strong {
    font-weight: 500;
}
.ime .icon {
    width: 15px;
}
.watermark {
    position: absolute;
    right: 25px;
    bottom: 23px;
    color: #fff;
    font: bold 20px/28px "DejaVu Sans", sans-serif;
}
```

FILE: script.js
```js
const use = (name, cls = "") => `<svg class="icon ${cls}"><use href="#i-${name}"/></svg>`;

// repeatable random numbers so the waveforms never change
let seed = 7;
function rnd() {
    seed = (seed * 16807) % 2147483647;
    return seed / 2147483647;
}

// Toolbar buttons
document.querySelectorAll("[data-icons]").forEach(box => {
    box.innerHTML = box.dataset.icons.split(" ").map(n => {
        const name = n.replace("*", "");
        return `<button class="${n[0] === "*" ? "tint" : ""}" aria-label="${name}">${use(name)}</button>`;
    }).join("");
});
document.getElementById("pl-tools").innerHTML =
    ["pencil", "brush", "ban", "mute", "slip", "slice", "select", "zoom", "play"].map(n => use(n)).join("");

// Oscilloscope
let osc = "";
for (let x = 0; x < 85; x++) {
    const mid = 14 + 8 * Math.sin((x - 16) / 13) * (x > 10 && x < 62 ? 1 : 0.2);
    osc += `${x ? "L" : "M"}${x} ${(mid - 2 - rnd() * 8).toFixed(1)}L${x} ${(mid + 2 + rnd() * 8).toFixed(1)}`;
}
document.querySelector(".osc").innerHTML = `<path d="${osc}" fill="none" stroke="#ccd3d6" stroke-width="1"/>`;

// Channel rack: name, colour, mixer track, sampler icon, volume knob angle
const channels = [
    ["欢快音..小)", "#69627c", "---", 0, 45],
    ["M..素材", "#5b7a62", "---", 1, 75],
    ["大..a调", "#6a785c", "---", 1, 90],
    ["擦c #2", "#6a785c", "---", 1, 75],
    ["BP..ф7", "#567871", "---", 1, 95],
    ["和弦A", "#3d6a8c", "18", 0, -35],
    ["yygm", "#69627c", "---", 1, 45],
    ["FX..R(1)", "#796c5a", "---", 1, -120],
    ["YY..度", "#6b5f78", "---", 1, 92],
    ["YY..#2", "#6b5f78", "---", 1, 10],
    ["e 5", "#5a6a78", "---", 1, 60],
    ["KSH..Go", "#67775e", "---", 1, 80],
    ["A STA", "#77735a", "21", 0, 30],
    ["vad..pm", "#77735a", "---", 1, 75],
    ["NCT..09", "#77735a", "---", 1, 80],
    ["KC..ns", "#745d66", "---", 1, 60],
    ["吧呢", "#725f76", "---", 1, 60],
    ["MCy..铺底", "#b03d3f", "---", 0, 80],
    ["空拍", "#4f5f80", "17", 0, -40],
    ["yy空..音色", "#4f5f80", "17", 0, -30],
    ["YY和弦", "#3d6a8c", "19", 0, 20],
    ["123..om", "#7a6460", "---", 1, 110],
    ["VED..40", "#546877", "---", 1, 90],
    ["FL Keys", "#b14f51", "1", 0, 165],
    ["飞..音", "#557069", "---", 1, -100],
    ["YY旋律", "#3f8a80", "12", 0, 25],
    ["drop..(1)", "#55735f", "---", 1, 55],
    ["过..组", "#635c76", "---", 1, 45],
    ["若隐若现", "#b14f51", "5", 0, -20],
    ["Fruity..电平", "#79834f", "auto", 0, 165],
    ["", "#79834f", "auto", 0, 165]
];

function steps() {
    let out = "";
    for (let i = 0; i < 16; i++) {
        out += `<button class="${i % 8 > 3 ? "r" : ""}" aria-label="${i + 1}"><i></i></button>`;
    }
    return `<div class="seq">${out}</div>`;
}
function roll(lines) {
    return `<svg class="roll" viewBox="0 0 257 30" preserveAspectRatio="none">${lines}</svg>`;
}
function bars(xs, ys, w) {
    return xs.map(x => ys.map(y => `<rect x="${x}" y="${y}" width="${w}" height="2" fill="#a9ccb6"/>`).join("")).join("");
}
document.getElementById("channels").innerHTML = channels.map((c, i) => {
    let seq = steps();
    if (c[0] === "和弦A") seq = roll(bars([33, 97, 161, 225], [10, 16, 26], 32));
    if (c[0] === "YY和弦") seq = roll(bars([0], [10, 16, 26], 257));
    const meter = i === 5 ? "#c8fbfb" : i === 8 ? "#a79fbd" : "";
    return `<div class="channel">
        <span class="led ${c[0] === "FL Keys" ? "off" : ""}"></span>
        <span class="pot"><i style="transform: rotate(${c[2] === "auto" ? 190 : 0}deg)"></i></span>
        <span class="pot"><i style="transform: rotate(${c[4]}deg)"></i></span>
        ${c[2] === "auto" ? `<span class="num free">${use("auto")}</span>` : `<span class="num">${c[2]}</span>`}
        <button class="name ${c[3] ? "smp" : ""}" style="background-color: ${c[1]}">${c[3] ? `<span>${c[0]}</span>${use("wave")}` : c[0]}</button>
        <span class="meter" ${meter ? `style="background-color: ${meter}"` : ""}></span>
        ${seq}
    </div>`;
}).join("");

// note dashes used in pattern previews
function notes(w, h, n, color, len = 7) {
    let out = "";
    for (let i = 0; i < n; i++) {
        const y = 2 + Math.floor(rnd() * (h - 4) / 3) * 3;
        out += `<rect x="${(rnd() * w).toFixed(1)}" y="${y}" width="${(3 + rnd() * len).toFixed(1)}" height="1" fill="${color}"/>`;
    }
    return out;
}
// short phrases that fall and climb back, with a few held notes on top
function melody(w, color) {
    let out = "";
    for (let x = 0; x < w; x += 28) {
        [[0, 3, 6], [5, 10, 2], [7, 20, 6], [13, 15, 2], [14, 9, 5], [20, 14, 2], [21, 22, 3], [24, 18, 2], [25, 9, 2]].forEach(n => {
            out += `<rect x="${x + n[0]}" y="${n[1]}" width="${n[2]}" height="2" fill="${color}"/>`;
        });
    }
    return out;
}

// Pattern picker
const patterns = [
    ["鼓组", "line mark"], ["小鼓", "line"], ["前后", "many"], ["擦擦声", "few mark"], ["电音过度", ""], ["开头BASS", "teal few"],
    ["旋律", "many"], ["旋律 #2", "many"], ["开头说唱", "many mark"], ["样式 10", "many"], ["样式 11", "many"], ["样式 12", "few"],
    ["样式 13", "many"], ["样式 14", "few"], ["样式 15", "many sel"], ["欢快", "few mark"], ["样式 17", ""], ["样式 18", "few"]
];
document.getElementById("patterns").innerHTML = patterns.map(([name, cls]) => {
    let art = "";
    if (cls.includes("line")) art = '<path d="M0 24L133 1" stroke="#616b71" fill="none"/>';
    if (cls.includes("many")) art = notes(133, 26, 70, "#59636a", 12);
    if (cls.includes("few")) art = notes(133, 26, 14, cls.includes("teal") ? "#74aca4" : "#59636a");
    return `<li class="${cls}"><svg class="preview" viewBox="0 0 133 26" preserveAspectRatio="none">${art}</svg>${use("pat")}<span>${name}</span></li>`;
}).join("");

// Timeline scale: first and last bar in view
const FIRST = 62.2;
const LAST = 379.4;
const PX = 3.525;
const pos = bar => ((bar - FIRST) / (LAST - FIRST) * 100).toFixed(3) + "%";
const len = n => (n / (LAST - FIRST) * 100).toFixed(3) + "%";

let ruler = `<div class="range" style="left: ${pos(116)}; width: ${len(230)}"></div>`;
for (let b = 65; b < 380; b += 8) {
    ruler += `<span class="${b > 115 && b < 345 ? "in" : ""}" style="left: ${pos(b)}">${b}</span>`;
}
ruler += `<svg class="head" style="left: ${pos(145)}" viewBox="0 0 16 13"><path d="M1 1h14v3l-7 8-7-8z"/></svg>`;
document.getElementById("ruler").innerHTML = ruler;

// Overview strip
let mini = '<i class="veil" style="left: 35%; width: 56%"></i>';
const miniColors = ["#6d7a78", "#746a78", "#66748a", "#5f7a7c"];
for (let i = 0; i < 80; i++) {
    mini += `<i style="left: ${(36 + rnd() * 20).toFixed(1)}%; top: ${2 + Math.floor(rnd() * 15)}px; width: ${(1 + rnd() * 5).toFixed(1)}%; background-color: ${miniColors[i % 4]}"></i>`;
    mini += `<i style="left: ${(56 + rnd() * 30).toFixed(1)}%; top: ${2 + Math.floor(rnd() * 15)}px; width: ${(1 + rnd() * 4).toFixed(1)}%; background-color: ${miniColors[i % 4]}"></i>`;
}
mini += '<i style="left: 32.500%; top: 4px; width: 4%; background-color: #6fc0ac"></i>';
mini += '<i style="left: 91%; top: 4px; width: 4%; background-color: #6fc0ac"></i>';
mini += '<i style="left: 37%; top: 17px; width: 54%; background-color: #8f9a5c"></i>';
mini += '<i class="now" style="left: 40%"></i>';
document.getElementById("mini").innerHTML = mini;

// Track headers
const strip = { 3: "white", 5: "grey", 6: "grey", 7: "white", 8: "white", 9: "white", 15: "grey", 16: "grey", 19: "grey", 20: "grey", 21: "grey" };
let names = "";
for (let t = 1; t <= 22; t++) {
    names += `<div class="track"><div class="${t === 1 ? "muted" : ""}">${t < 22 ? "Track " + t : ""}</div><i class="${strip[t] ? "c-" + strip[t] : ""}"></i></div>`;
}
document.getElementById("names").innerHTML = names;

// Clip artwork, all drawn 25 high
const C = {
    teal: "#4b8079", mint: "#539a8e", olive: "#6f7b4b", sand: "#6b6652", brown: "#6d5f50", pink: "#794663", blue: "#4c5682",
    purple: "#5e5066", grey: "#4b545b", green: "#4d7263", slate: "#4a5964", red: "#6e474d", rust: "#74504c", leaf: "#506f55",
    khaki: "#62664a", plum: "#604c60"
};
const art = {
    diag: w => `<path d="M0 25L${w} 2" stroke="#8d969b" fill="none"/>`,
    diagShort: w => `<path d="M2 25L${w - 2} 9M${w - 4} 24h4" stroke="#788288" fill="none"/>`,
    curve: w => `<path d="M0 15Q${w * 0.6} 12 ${w} 1" stroke="#b8d4d0" stroke-width="1.500" fill="none"/>`,
    free: w => `<path d="M0 3h3v14L${w / 2} 10H${w}" stroke="#cfa6bd" stroke-width="1.500" fill="none"/>`,
    wave: (w, c = "#c4bfa8") => {
        let up = "", dn = "";
        for (let x = 0; x <= w; x += 1) {
            const a = (8 + rnd() * 4) * (Math.sin(x / 6) > -0.85 ? 1 : 0.7) * (x > w - 3 ? 0.4 : 1);
            up += `L${x} ${(13 - a).toFixed(1)}`;
            dn = `L${x} ${(13 + a).toFixed(1)}` + dn;
        }
        return `<path d="M0 13${up}${dn}z" fill="${c}"/>`;
    },
    decay: (w, c) => `<path d="M0 1L${w * 0.15} 5 ${w * 0.45} 10 ${w * 0.55} 12H${w}v1H${w * 0.55}L${w * 0.45} 15 ${w * 0.15} 20 0 24z" fill="${c}"/>`,
    kick: (w, c) => `<path d="M0 1L${w * 0.3} 5 ${w * 0.6} 10 ${w * 0.7} 12H${w}v1H${w * 0.7}L${w * 0.6} 15 ${w * 0.3} 20 0 24z" fill="${c}"/>`,
    burst: (w, c) => `<path d="M2 4l2-2 2 2 2-2 2 4 4 4 4 2h${w - 18}v1h${18 - w}l-4 2-4 4-2 4-2-2-2 2-2-3z" fill="${c}"/>`,
    crash: (w, c) => `<path d="M0 1L6 7 12 12H${w}v1H12L6 18 0 23z" fill="${c}"/><path d="M1 1h4v4h-3z" fill="#d08f50"/>`,
    thin: (w, c) => `<path d="M0 9l${w * 0.5} 1L${w} 12v1L${w * 0.5} 15 0 16z" fill="${c}"/>`,
    cone: (w, c) => `<path d="M0 7l4-1 ${w * 0.4} 3L${w} 11v3L${w * 0.4} 16 4 19 0 18z" fill="${c}"/>`,
    fat: (w, c) => `<path d="M0 6l5-2L${w * 0.5} 6 ${w} 13 ${w * 0.5} 19 5 22 0 20z" fill="${c}"/>`,
    snare: (w, c) => `<path d="M0 12L${w * 0.4} 9 ${w * 0.6} 3 ${w * 0.75} 1 ${w} 7v11L${w * 0.75} 24 ${w * 0.6} 21 ${w * 0.4} 15 0 13z" fill="${c}"/>`,
    hat: (w, c) => `<path d="M0 1L${w} 12 0 24z" fill="${c}"/>`,
    rev: (w, c) => `<path d="M${w} 1v23L${w * 0.4} 15 0 13 ${w * 0.4} 9z" fill="${c}"/>`,
    fill: (w, c) => `<path d="M0 4L${w * 0.5} 2 ${w} 0v25h-2l-1-1H3l-1 1H0z" fill="${c}"/>`,
    block: (w, c) => `<rect width="${w}" height="25" fill="#b7aec5"/>${c ? `<path d="M6 24Q${w * 0.5} 20 ${w * 0.7} 16T${w} 14" stroke="#a9a6d4" stroke-width="2" fill="none" opacity="0.6"/>` : ""}`,
    full: w => {
        let top = "", bot = "";
        for (let x = 0; x <= w; x += 2) {
            top += `L${x} ${(1 + rnd() * 5).toFixed(1)}L${x + 1} ${(5 + rnd() * 3).toFixed(1)}`;
            bot += `<rect x="${x}" y="${(22 + rnd() * 4).toFixed(1)}" width="1" height="3" fill="#39434a"/>`;
        }
        return `<path d="M0 25${top}L${w} 25z" fill="#c3c5ac"/>${bot}<path d="M${w * 0.4} 24L${w} 2v8L${w * 0.6} 24z" fill="#b9bfc9" opacity="0.6"/>`;
    },
    dense: w => notes(w, 26, Math.round(w * 1.7), "#98a2a8", 5),
    mid: w => notes(w, 26, Math.round(w * 1.2), "#7d888e", 8),
    bass: w => {
        let out = `<rect y="13" width="${w}" height="4" fill="#598e88" opacity="0.7"/>`;
        for (let x = 3; x < w; x += 7) out += `<rect x="${x}" y="3" width="1" height="4" fill="#7c9c9a"/><rect x="${x}" y="21" width="1" height="4" fill="#7c9c9a"/>`;
        return out;
    },
    melody: w => melody(w, "#7b868c"),
    hits: w => `<path d="M0 24h${w}" stroke="#7e888d" stroke-width="2" stroke-dasharray="1 1"/>`,
    flat: w => `<path d="M0 16V10h${w - 6}l6 1v14H0z" fill="#474d48"/><path d="M0 9.500h${w - 6}l6 2" stroke="#b6bc8e" fill="none"/>`,
    drop: w => `<rect y="17" width="${w}" height="8" fill="#454e48"/><path d="M0 16.500h${Math.max(w - 3, 0)}l3 8" stroke="#c2c8a2" stroke-width="1.500" fill="none"/>`,
    corner: w => `<path d="M0 24h${w - 1}V1" stroke="#b8dccb" fill="none"/>`,
    none: () => ""
};

// track number -> markup of its clips
const lanes = {};
function clip(track, start, end, color, icon, label, body, arg, cls = "") {
    const w = (end - start) * PX;
    const head = (icon && w > 11 ? use(icon) : "") + (label || "");
    lanes[track] = (lanes[track] || "") +
        `<div class="clip ${cls}" style="left: ${pos(start)}; width: ${len(end - start)}">
            <header style="background-color: ${C[color]}">${head}</header>
            <svg class="body" viewBox="0 0 ${w.toFixed(2)} 25" preserveAspectRatio="none">${art[body](w, arg)}</svg>
        </div>`;
}
function range(a, b, step) {
    const out = [];
    for (let i = a; i <= b; i += step) out.push(i);
    return out;
}

clip(2, 117, 125, "teal", "auto", "", "curve");

// Track 3: hits, 1 = loud, 0 = quiet
[[117, "11101001101010101011"], [199, "1010"], [223, "1010101011"], [265, "10101010101010011110"]].forEach(([start, hits]) => {
    hits.split("").forEach((h, i) => clip(3, start + i * 4, start + i * 4 + 4, "grey", "pat", "", h === "1" ? "diag" : "diagShort", "", h === "1" ? "" : "dimclip"));
});

[133, 149, 165, 181, 223, 255, 297, 313, 329].forEach(b => {
    const c = b === 297 ? "#a9cbb4" : b === 223 ? "#a9c3c4" : "#aaa6c6";
    lanes[4] = (lanes[4] || "") + `<div class="clip" style="left: ${pos(b - 1)}; width: ${len(1)}"><svg width="100%" height="41"><rect x="1" width="1" height="16" fill="#5d5a6c"/><rect y="16" width="100%" height="25" fill="${c}"/></svg></div>`;
});

clip(5, 132, 149, "pink", "auto", "Free..率", "free");
clip(5, 165, 181, "sand", "clip", "1_叶..ls)", "wave", undefined, "small");
clip(5, 181, 198, "sand", "clip", "1_叶..als)", "wave", undefined, "small");
clip(5, 198.5, 215.8, "sand", "clip", "1_叶..als)", "wave", undefined, "small");
clip(5, 255, 264.4, "sand", "clip", "", "wave");
clip(5, 264.6, 273, "sand", "clip", "", "wave");
clip(5, 273, 281, "sand", "clip", "", "wave");
clip(5, 281, 298.6, "sand", "clip", "1_叶..als)", "wave", undefined, "small");
clip(5, 312, 329, "pink", "auto", "Free..率", "free");

const spikes = [133, 137, 141, 145, 149, 157, 165, 173, 181, 189, 199, 207, 215, 223, 231, 239, 247, 255, 265, 273, 281, 289, 297, 305, 313, 317, 321, 325, 329];
art.spikes = () => {
    const d = spikes.map(b => {
        const x = (b - 125) * PX;
        return `H${(x - 5).toFixed(1)}L${(x - 2).toFixed(1)} 19L${x.toFixed(1)} 10V24`;
    }).join("");
    return `<path d="M0 10V24${d}H${212 * PX}" stroke="#ccd4a6" stroke-width="1.500" fill="none"/>`;
};
clip(6, 117, 125, "olive", "auto", "", "flat");
clip(6, 125, 337, "olive", "auto", "BASS处理1 - BASS - Band 1 freq", "spikes", "", "small");
clip(6, 337, 345, "olive", "auto", "", "flat");

[[117, 125, "mint", "", "bass"], [125, 132, "mint", "", "bass"], [133, 149, "grey", "开..唱", "mid"], [149, 165, "grey", "旋律 #2", "mid"],
 [165, 181, "grey", "样式 15", "dense"], [181, 215, "grey", "样式 10", "dense"], [215, 223, "grey", "", "dense"], [223, 231, "grey", "", "dense"],
 [231, 255, "grey", "样式 11", "dense"], [255, 297, "grey", "样式 10", "dense"], [297, 313, "grey", "样式 11", "dense"],
 [313, 329, "grey", "开..唱", "mid"], [329, 337, "mint", "", "bass"], [337, 345, "mint", "", "bass"]
].forEach(p => clip(7, p[0], p[1], p[2], "pat", p[3], p[4]));

[...range(133, 173, 8), 189, 199, 207, ...range(223, 255, 8), ...range(265, 321, 8)].forEach(b => clip(8, b, b + 7.3, "grey", "", "", "hits", "", "striped"));
clip(8, 181, 189, "grey", "pat", "", "melody");

clip(9, 133, 149, "grey", "pat", "欢快", "melody");
clip(9, 215, 223, "grey", "pat", "", "melody");
clip(9, 223, 231, "grey", "pat", "", "melody");
clip(9, 231, 255, "grey", "pat", "样式 14", "melody");
clip(9, 297, 313, "grey", "pat", "样式 14", "melody");
clip(9, 313, 329, "grey", "pat", "欢快", "melody");

clip(10, 147, 165, "grey", "pat", "样式 12", "melody");
clip(10, 197, 199.7, "slate", "", "", "decay", "#b4c4c6");
clip(10, 252.4, 254.5, "green", "", "", "corner");
clip(10, 263, 265.7, "slate", "", "", "decay", "#b4c4c6");

[132.8, 149, 157, 165, 313].forEach(b => clip(11, b - 0.2, b + 0.1, "grey", "", "", "block"));
clip(11, 197, 201.6, "green", "clip", "", "decay", "#b0c6c0");
clip(11, 215, 219.8, "green", "clip", "", "decay", "#b0c6c0");
clip(11, 220, 227, "pink", "clip", "", "burst", "#c4a6bc");
clip(11, 263, 267.6, "green", "clip", "", "decay", "#b0c6c0");

[[139, "red"], [155, "red"], [171, "red"], [187, "red"], [197, "red"], [205, "red"], [213, "blue"], [229, "blue"], [237, "red"], [245, "blue"],
 [263, "blue"], [271, "red"], [279, "blue"], [287, "blue"], [303, "blue"], [319, "red"]
].forEach(([b, c]) => clip(12, b, b + 2, c, "", "", "fill", c === "red" ? "#c6a9b0" : "#bdaec4"));
clip(12, 147, 149.6, "green", "", "", "corner");

clip(13, 125, 133, "brown", "clip", "", "cone", "#c9b2aa");
[181, 189, 199, 207, 255, 265, 273, 281, 289].forEach(b => clip(13, b, b + 8, "slate", "clip", "", "thin", "#aab6bd"));
clip(13, 329, 337, "brown", "clip", "", "cone", "#c9b2aa");

[...range(125, 189, 8), 199, ...range(223, 255, 8), ...range(265, 337, 8)].forEach(b => clip(14, b, b + 4, "rust", "clip", "", "kick", "#c8aeaa"));
[...range(137, 185, 8), ...range(195, 251, 8), ...range(261, 341, 8)].forEach(b => clip(15, b, b + 4, "leaf", "clip", "", "snare", "#a9c6ad"));

[117, 125, 133, 137, 139, 140, 141, 145, 146, 147, 148, 149, 157, 165, 173, 179, 180, 181, 189, 197, 199, 205, 206, 207, 213, 214, 215,
 219, 220, 221, 222, 223, 231, 238, 239, 247, 253, 254, 255, 263, 265, 271, 272, 273, 279, 280, 281, 287, 288, 289, 297, 305, 311, 312,
 313, 317, 319, 320, 321, 325, 326, 327, 328, 329, 337, 344.5
].forEach(b => clip(16, b, b + 0.9, "purple", "", "", "hat", "#aaaac0"));

[...range(133, 189, 8), 199, 207, ...range(223, 255, 8), ...range(265, 345, 8)].forEach(b => clip(17, b - 1.2, b, "plum", "", "", "rev", "#b8a0b4"));

[165, 173, 199, 207, 265, 273, 281, 289].forEach(b => clip(18, b, b + 8, "brown", "clip", "", "crash", "#c3b9a6"));
clip(18, 215, 223, "teal", "clip", "", "fat", "#a8c4c0");

[141, 149, 157, 215, 231, 239, 297].forEach(b => clip(19, b, b + 8, "purple", "clip", "", "block"));
[173, 191, 207, 223, 247, 257, 273, 289, 305, 321].forEach(b => clip(19, b, b + 8, "blue", "auto", "", "block", 1));

[[133, 149, "b", 1], [149, 165, "k", 1], [165, 181, "b", 1], [181, 189, "k"], [189, 191, "k"], [191, 193, "k"], [193, 199, "b"],
 [199, 215, "k", 1], [215, 223, "k"], [223, 239, "k", 1], [239, 255, "b", 1], [255, 257, "b"], [257, 259, "k"], [259, 265, "b"],
 [265, 281, "b", 1], [281, 297, "k", 1], [297, 313, "b", 1], [313, 329, "b", 1]
].forEach(([a, b, c, t]) => clip(20, a, b, c === "b" ? "blue" : "khaki", c === "b" ? "auto" : "clip", t ? (c === "b" ? "MCY..lier" : "MC..2)") : "", "full", "", "small"));

const eights = [...range(133, 181, 8), 189, 191, 193, ...range(199, 247, 8), 255, 257, 259, ...range(265, 321, 8)];
eights.forEach((b, i) => clip(21, b, eights[i + 1] || 329, "olive", "auto", "", "drop"));
eights.filter(b => b >= 149 && b < 313 && b !== 215).forEach(b => {
    const i = eights.indexOf(b);
    clip(22, b, eights[i + 1], "olive", "auto", "", "none");
});

// Grid: a line every 4 bars, shading that swaps every 16
let grid = "";
for (let b = 53; b < LAST; b += 32) {
    grid += `<rect x="${pos(b)}" y="0" width="${len(16)}" height="100%" fill="#10202c" opacity="0.14"/>`;
}
for (let b = 65; b < LAST; b += 4) {
    grid += `<rect x="${pos(b)}" y="0" width="1" height="100%" fill="#1c2631"/>`;
}
let out = `<div class="region" style="left: ${pos(116)}; width: ${len(230)}"></div><svg class="grid">${grid}</svg>`;
out += `<div class="playhead" style="left: ${pos(145)}"></div>`;
for (let t = 1; t <= 22; t++) {
    out += `<div class="lane">${lanes[t] || ""}</div>`;
}
document.getElementById("lanes").innerHTML = out;
```
